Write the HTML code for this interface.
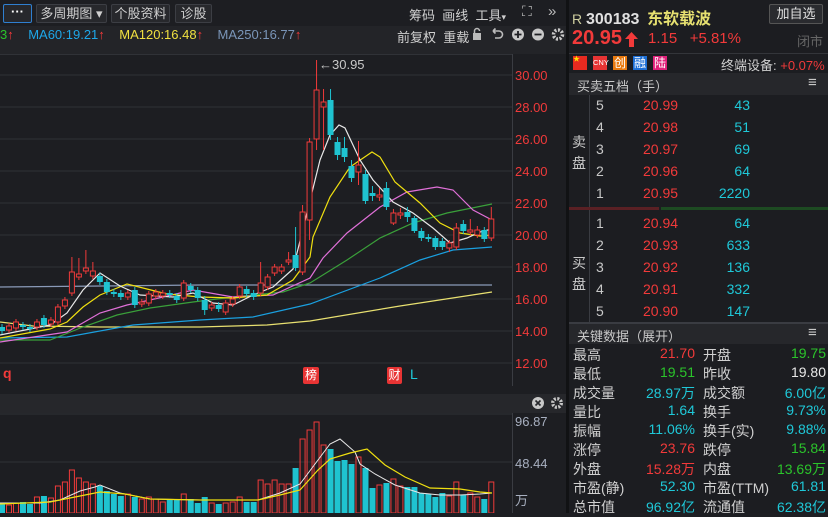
<!DOCTYPE html>
<html><head><meta charset="utf-8">
<style>
*{margin:0;padding:0;box-sizing:border-box}
body{width:828px;height:513px;background:#1d1e22;font-family:"Liberation Sans","Noto Sans CJK SC",sans-serif;color:#c8c8c8;position:relative;overflow:hidden;font-size:13px}
.a{position:absolute;white-space:nowrap}
.btn{position:absolute;top:4px;height:19px;border:1px solid #3c3e44;border-radius:2px;background:#27282c;color:#d0d0d0;font-size:13px;line-height:17px;text-align:center}
.r{color:#f23a3a}.c{color:#1fc8d8}.g{color:#2bc42b}.w{color:#e8e8e8}
</style></head><body>
<div class="a" style="left:0;top:0;width:566px;height:26px;background:#1d1e22"></div>
<div class="btn" style="left:3px;width:29px;border-color:#2f7fd0;color:#fff;font-weight:bold;line-height:14px">···</div>
<div class="btn" style="left:36px;width:71px">多周期图 ▾</div>
<div class="btn" style="left:111px;width:59px">个股资料</div>
<div class="btn" style="left:175px;width:37px">诊股</div>
<div class="a" style="left:409px;top:5px;font-size:13px;color:#d0d0d0">筹码&nbsp; 画线&nbsp; 工具<span style="font-size:9px">▾</span></div>
<div class="a" style="left:522px;top:3px;font-size:14px;color:#bbb">⛶</div>
<div class="a" style="left:548px;top:3px;font-size:15px;color:#bbb">»</div>
<div class="a" style="left:0;top:26px;width:566px;height:28px;background:#232428"></div>
<div class="a" style="left:0;top:27px;font-size:13px"><span class="g">3</span><span class="r">↑</span>&nbsp;&nbsp;&nbsp; <span style="color:#1ea7e8">MA60:19.21</span><span class="r">↑</span>&nbsp;&nbsp;&nbsp; <span style="color:#f0e040">MA120:16.48</span><span class="r">↑</span>&nbsp;&nbsp;&nbsp; <span style="color:#7a95b8">MA250:16.77</span><span class="r">↑</span></div>
<div class="a" style="left:397px;top:27px;font-size:13px;color:#d0d0d0">前复权&nbsp; 重载</div>
<svg class="a" style="left:468px;top:27px" width="100" height="16">
<rect x="5" y="6" width="8" height="7" fill="#bbb"/><path d="M6.5 6V4a2.5 2.5 0 0 1 5 0" stroke="#bbb" fill="none" stroke-width="1.5"/>
<path d="M25 4h6a3.5 3.5 0 0 1 0 7h-4M25 4l2.5-2.5M25 4l2.5 2.5" stroke="#bbb" fill="none" stroke-width="1.6"/>
<circle cx="50" cy="7.5" r="6" fill="#c8c8c8"/><path d="M46.5 7.5h7M50 4v7" stroke="#1d1e22" stroke-width="1.8"/>
<circle cx="70" cy="7.5" r="6" fill="#c8c8c8"/><path d="M66.5 7.5h7" stroke="#1d1e22" stroke-width="1.8"/>
<circle cx="90" cy="7.5" r="4.5" fill="none" stroke="#c8c8c8" stroke-width="3.5" stroke-dasharray="2 1.5"/>
</svg>
<svg class="a" style="left:0;top:54px" width="566" height="459" id="ch"></svg>
<div class="a" style="left:0;top:386px;width:566px;height:8px;background:#1d1e22"></div>
<div class="a" style="left:0;top:394px;width:566px;height:19px;background:#26272b"></div>
<svg class="a" style="left:530px;top:396px" width="36" height="14"><circle cx="8" cy="7" r="6" fill="#c8c8c8"/><path d="M5.5 4.5l5 5M10.5 4.5l-5 5" stroke="#26272b" stroke-width="1.6"/><circle cx="27" cy="7" r="4.3" fill="none" stroke="#c8c8c8" stroke-width="3.4" stroke-dasharray="2 1.4"/></svg>
<div class="a r" style="left:3px;top:365px;font-weight:bold;font-size:14px">q</div>
<div class="a" style="left:303px;top:367px;width:16px;height:17px;background:#e83434;color:#fff;font-size:12px;text-align:center;line-height:17px;border-radius:2px">榜</div>
<div class="a" style="left:387px;top:367px;width:15px;height:17px;background:#e83434;color:#fff;font-size:12px;text-align:center;line-height:17px;border-radius:2px">财</div>
<div class="a c" style="left:410px;top:366px;font-size:14px">L</div>
<div class="a" style="left:566px;top:0;width:3px;height:513px;background:#111214"></div>
<div class="a" style="left:569px;top:0;width:259px;height:513px;background:#1c1d21"></div>
<div class="a" style="left:572px;top:5px;font-size:14px;color:#cfcfa0">R <span style="color:#e0e0e0;font-weight:bold;font-size:16px">300183</span>&nbsp; <span style="color:#e6e070;font-weight:bold;font-size:16px">东软载波</span></div>
<div class="a" style="left:769px;top:4px;width:54px;height:20px;border:1px solid #555;border-radius:2px;background:#2a2b2f;color:#e0e0e0;font-size:13px;line-height:18px;text-align:center">加自选</div>
<div class="a r" style="left:572px;top:27px;font-size:20px;font-weight:bold">20.95</div>
<svg class="a" style="left:625px;top:32px" width="13" height="15"><path d="M6.5 0L13 7H9v8H4V7H0z" fill="#f23a3a"/></svg>
<div class="a r" style="left:648px;top:30px;font-size:15px">1.15&nbsp;&nbsp; +5.81%</div>
<div class="a" style="left:797px;top:31px;font-size:13px;color:#666">闭市</div>
<div class="a" style="left:569px;top:53px;width:259px;height:1px;background:#33353a"></div>
<div class="a" style="left:573px;top:56px;width:14px;height:14px;background:#e82a20;color:#ffde00;font-size:7px;line-height:8px">★</div>
<div class="a" style="left:593px;top:56px;width:14px;height:14px;background:#e83434;color:#fff;font-size:7.5px;line-height:14px;text-align:center">CNY</div>
<div class="a" style="left:613px;top:56px;width:14px;height:14px;background:#e87a10;color:#fff;font-size:12px;line-height:14px;text-align:center">创</div>
<div class="a" style="left:633px;top:56px;width:14px;height:14px;background:#1d6fd6;color:#fff;font-size:12px;line-height:14px;text-align:center">融</div>
<div class="a" style="left:653px;top:56px;width:14px;height:14px;background:#e0207a;color:#fff;font-size:12px;line-height:14px;text-align:center">陆</div>
<div class="a" style="left:721px;top:55px;font-size:13px;color:#d0d0d0">终端设备: <span class="r">+0.07%</span></div>
<div class="a" style="left:569px;top:73px;width:259px;height:22px;background:#26272b"></div>
<div class="a" style="left:577px;top:76px;font-size:13px;color:#c8c8c8">买卖五档（手）</div>
<div class="a" style="left:808px;top:74px;font-size:15px;color:#c8c8c8">≡</div>
<div class="a" style="left:589px;top:95px;width:1px;height:228px;background:#3a3c42"></div>
<div class="a" style="left:572px;top:132px;font-size:14px;line-height:21px;color:#c8c8c8;width:14px">卖<br>盘</div>
<div class="a" style="left:572px;top:253px;font-size:14px;line-height:21px;color:#c8c8c8;width:14px">买<br>盘</div>
<div class="a" style="left:569px;top:207px;width:90px;height:3px;background:#5a2024"></div>
<div class="a" style="left:661px;top:207px;width:167px;height:3px;background:#1d4a22"></div>
<div class="a" style="left:569px;top:322px;width:259px;height:2px;background:#3a3c42"></div>
<div id="ob"></div>
<div class="a" style="left:569px;top:324px;width:259px;height:20px;background:#26272b"></div>
<div class="a" style="left:577px;top:326px;font-size:13px;color:#c8c8c8">关键数据（展开）</div>
<div class="a" style="left:808px;top:324px;font-size:15px;color:#c8c8c8">≡</div>
<div id="kd"></div>
<script>
var ch=document.getElementById('ch'),h='';
var R='#f03a3a',C='#1fc3d0';
[75,107,139,171,203,235,267,299,331,363].forEach(function(y){h+='<line x1="0" x2="512" y1="'+(y-54)+'" y2="'+(y-54)+'" stroke="#303237"/>';});
h+='<line x1="0" x2="512" y1="0.5" y2="0.5" stroke="#303237"/>';
h+='<line x1="512.5" x2="512.5" y1="0" y2="332" stroke="#3a3c42"/>';
var labs=['30.00','28.00','26.00','24.00','22.00','20.00','18.00','16.00','14.00','12.00'];
labs.forEach(function(t,i){h+='<text x="515" y="'+(75+32*i-54+5)+'" fill="#f03a3a" font-size="13" font-family="Liberation Sans">'+t+'</text>';});
function pl(pts,col,w){var s='';for(var i=0;i<pts.length;i+=2)s+=pts[i]+','+(pts[i+1]-54)+' ';h+='<polyline points="'+s+'" fill="none" stroke="'+col+'" stroke-width="'+(w||1.2)+'"/>';}
pl([0,287,200,285,492,285],'#8a9ab8');
pl([0,322,33,326,100,327,200,327,267,325,310,321,400,306,492,292],'#e8e070');
pl([0,338,67,337,133,325,200,320,253,317,310,304,380,278,420,260,453,250,492,247],'#1aa0e0');
pl([0,340,50,340,83,327,117,315,150,308,193,302,233,297,283,292,310,283,347,260,380,238,413,223,447,213,492,204],'#3aa03a');
pl([0,342,67,332,100,313,127,305,150,300,193,290,233,297,273,295,310,278,323,258,347,233,380,207,407,192,437,187,453,190,473,210,492,220],'#e070d8');
pl([0,338,50,329,67,322,83,307,100,295,127,284,147,289,167,294,200,297,233,298,267,295,293,280,310,257,313,237,330,197,350,167,372,152,380,157,395,182,420,203,440,223,460,233,480,236,492,235],'#f0e010');
pl([0,335,50,325,67,313,83,290,100,273,120,286,140,295,173,297,193,293,213,303,233,305,253,295,273,287,293,269,302,233,320,160,330,135,339,125,345,128,360,160,373,180,393,202,413,213,433,228,450,243,467,238,480,232,492,229],'#e8e8e8');
var cd=[[327,331,'c'],[326,330,'r'],[322,328,'r'],[325,327,'c'],[327,329,'c'],[322,327,'r'],[318,325,'c'],[320,324,'r'],[307,322,'r'],[300,306,'r'],[272,293,'r',257],[274,277,'r',258],[268,271,'r',250],[271,276,'r',262],[276,282,'c'],[282,292,'c'],[292,294,'c'],[293,297,'c'],[293,297,'r'],[290,305,'c'],[302,304,'r'],[294,303,'r'],[292,296,'r'],[293,296,'r'],[293,295,'c'],[296,300,'c'],[283,298,'r'],[286,290,'c'],[290,298,'c'],[300,310,'c',296,315],[305,308,'r'],[305,309,'c'],[303,312,'r'],[299,304,'r'],[287,296,'r'],[289,294,'c'],[293,297,'c'],[283,293,'r',262],[277,287,'r'],[267,273,'r'],[267,271,'r'],[260,262,'r',252],[255,268,'c',227],[212,272,'r',205,275],[142,220,'r',138,240],[90,139,'r',60,150],[102,107,'r',89,150],[100,135,'c',89,140],[142,155,'c',137,160],[148,157,'c',137,162],[166,178,'c',160,182],[165,172,'r',141,185],[174,201,'c',170,204],[193,196,'c',186,201],[195,197,'r',188,201],[188,207,'c',182,210],[213,223,'r',209,225],[213,215,'r',208,219],[212,217,'c',207,222],[218,231,'c',216,233],[231,238,'c',228,241],[237,239,'c',234,242],[238,247,'c',236,250],[241,247,'c',238,250],[243,248,'r',240,252],[228,247,'r',223,250],[224,231,'c',220,234],[230,232,'r',219,236],[230,235,'r',226,238],[230,239,'c',227,242],[219,238,'r',207,241]];
var vt=[504,505,503,502,504,497,496,498,486,482,470,478,482,484,486,491,494,496,494,497,499,497,499,502,499,499,494,499,503,497,503,504,503,502,497,502,502,480,484,480,484,484,468,439,430,422,445,449,461,460,464,457,468,488,485,483,479,486,487,487,493,494,497,493,496,482,495,493,497,499,482];
h+='<line x1="0" x2="512" y1="'+(414-54)+'" y2="'+(414-54)+'" stroke="#303237"/><line x1="0" x2="512" y1="'+(462-54)+'" y2="'+(462-54)+'" stroke="#303237"/><line x1="512.5" x2="512.5" y1="'+(413-54)+'" y2="459" stroke="#3a3c42"/>';
h+='<text x="515" y="'+(421-54+5)+'" fill="#a8b0c0" font-size="13" font-family="Liberation Sans">96.87</text><text x="515" y="'+(463-54+5)+'" fill="#a8b0c0" font-size="13" font-family="Liberation Sans">48.44</text><text x="515" y="'+(500-54+5)+'" fill="#a8b0c0" font-size="13" font-family="Liberation Sans,Noto Sans CJK SC">万</text>';
cd.forEach(function(d,i){var x=2+i*6.99,col=d[2]=='r'?R:C,t=d[0]-54,b=d[1]-54;if(b-t<1.5)b=t+1.5;
var wt=(d[3]||d[0]-3)-54,wb=(d[4]||d[1]+3)-54;
h+='<line x1="'+x+'" x2="'+x+'" y1="'+wt+'" y2="'+wb+'" stroke="'+col+'"/>';
if(d[2]=='r')h+='<rect x="'+(x-2.5)+'" y="'+t+'" width="5" height="'+(b-t)+'" fill="#1d1e22" stroke="'+col+'"/>';
else h+='<rect x="'+(x-3)+'" y="'+t+'" width="6" height="'+(b-t)+'" fill="'+col+'"/>';
var vy=vt[i]-54;
if(d[2]=='r')h+='<rect x="'+(x-2.5)+'" y="'+vy+'" width="5" height="'+(459-vy)+'" fill="none" stroke="'+col+'"/>';
else h+='<rect x="'+(x-3)+'" y="'+vy+'" width="6" height="'+(459-vy)+'" fill="'+col+'"/>';});
pl([0,503,40,503,60,500,80,491,95,487,100,485,120,493,150,499,200,500,258,500,280,493,300,484,318,460,330,444,340,439,355,452,360,464,375,474,395,485,420,493,440,495,460,495,480,494,492,493],'#e8e8e8',1);
pl([0,504,50,502,80,496,100,492,125,494,150,499,200,500,258,500,280,495,300,490,318,470,330,459,350,453,367,449,385,465,405,477,430,488,460,489,480,492,492,493],'#f0e010',1.2);
ch.innerHTML=h+'<text x="319" y="'+(64-54+5)+'" fill="#c8c8c8" font-size="13" font-family="Liberation Sans">←30.95</text>';
var ob=[['5','20.99','43'],['4','20.98','51'],['3','20.97','69'],['2','20.96','64'],['1','20.95','2220'],['1','20.94','64'],['2','20.93','633'],['3','20.92','136'],['4','20.91','332'],['5','20.90','147']];
var s='';ob.forEach(function(o,i){var y=(i<5?97+22*i:215+22*(i-5));
s+='<div class="a" style="left:596px;top:'+y+'px;font-size:14px;color:#c8c8c8">'+o[0]+'</div><div class="a r" style="left:643px;top:'+y+'px;font-size:14px">'+o[1]+'</div><div class="a c" style="left:690px;width:60px;text-align:right;top:'+y+'px;font-size:14px">'+o[2]+'</div>';});
document.getElementById('ob').innerHTML=s;
var kd=[['最高','21.70','r','开盘','19.75','g'],['最低','19.51','g','昨收','19.80','w'],['成交量','28.97万','c','成交额','6.00亿','c'],['量比','1.64','c','换手','9.73%','c'],['振幅','11.06%','c','换手(实)','9.88%','c'],['涨停','23.76','r','跌停','15.84','g'],['外盘','15.28万','r','内盘','13.69万','g'],['市盈(静)','52.30','c','市盈(TTM)','61.81','c'],['总市值','96.92亿','c','流通值','62.38亿','c']];
s='';kd.forEach(function(k,i){var y=345+19*i;
s+='<div class="a" style="left:573px;top:'+y+'px;font-size:14px;color:#d0d0d0">'+k[0]+'</div><div class="a '+k[2]+'" style="left:614px;width:81px;text-align:right;top:'+y+'px;font-size:14px">'+k[1]+'</div><div class="a" style="left:703px;top:'+y+'px;font-size:14px;color:#d0d0d0">'+k[3]+'</div><div class="a '+k[5]+'" style="left:746px;width:80px;text-align:right;top:'+y+'px;font-size:14px">'+k[4]+'</div>';});
document.getElementById('kd').innerHTML=s;
</script>
</body></html>
